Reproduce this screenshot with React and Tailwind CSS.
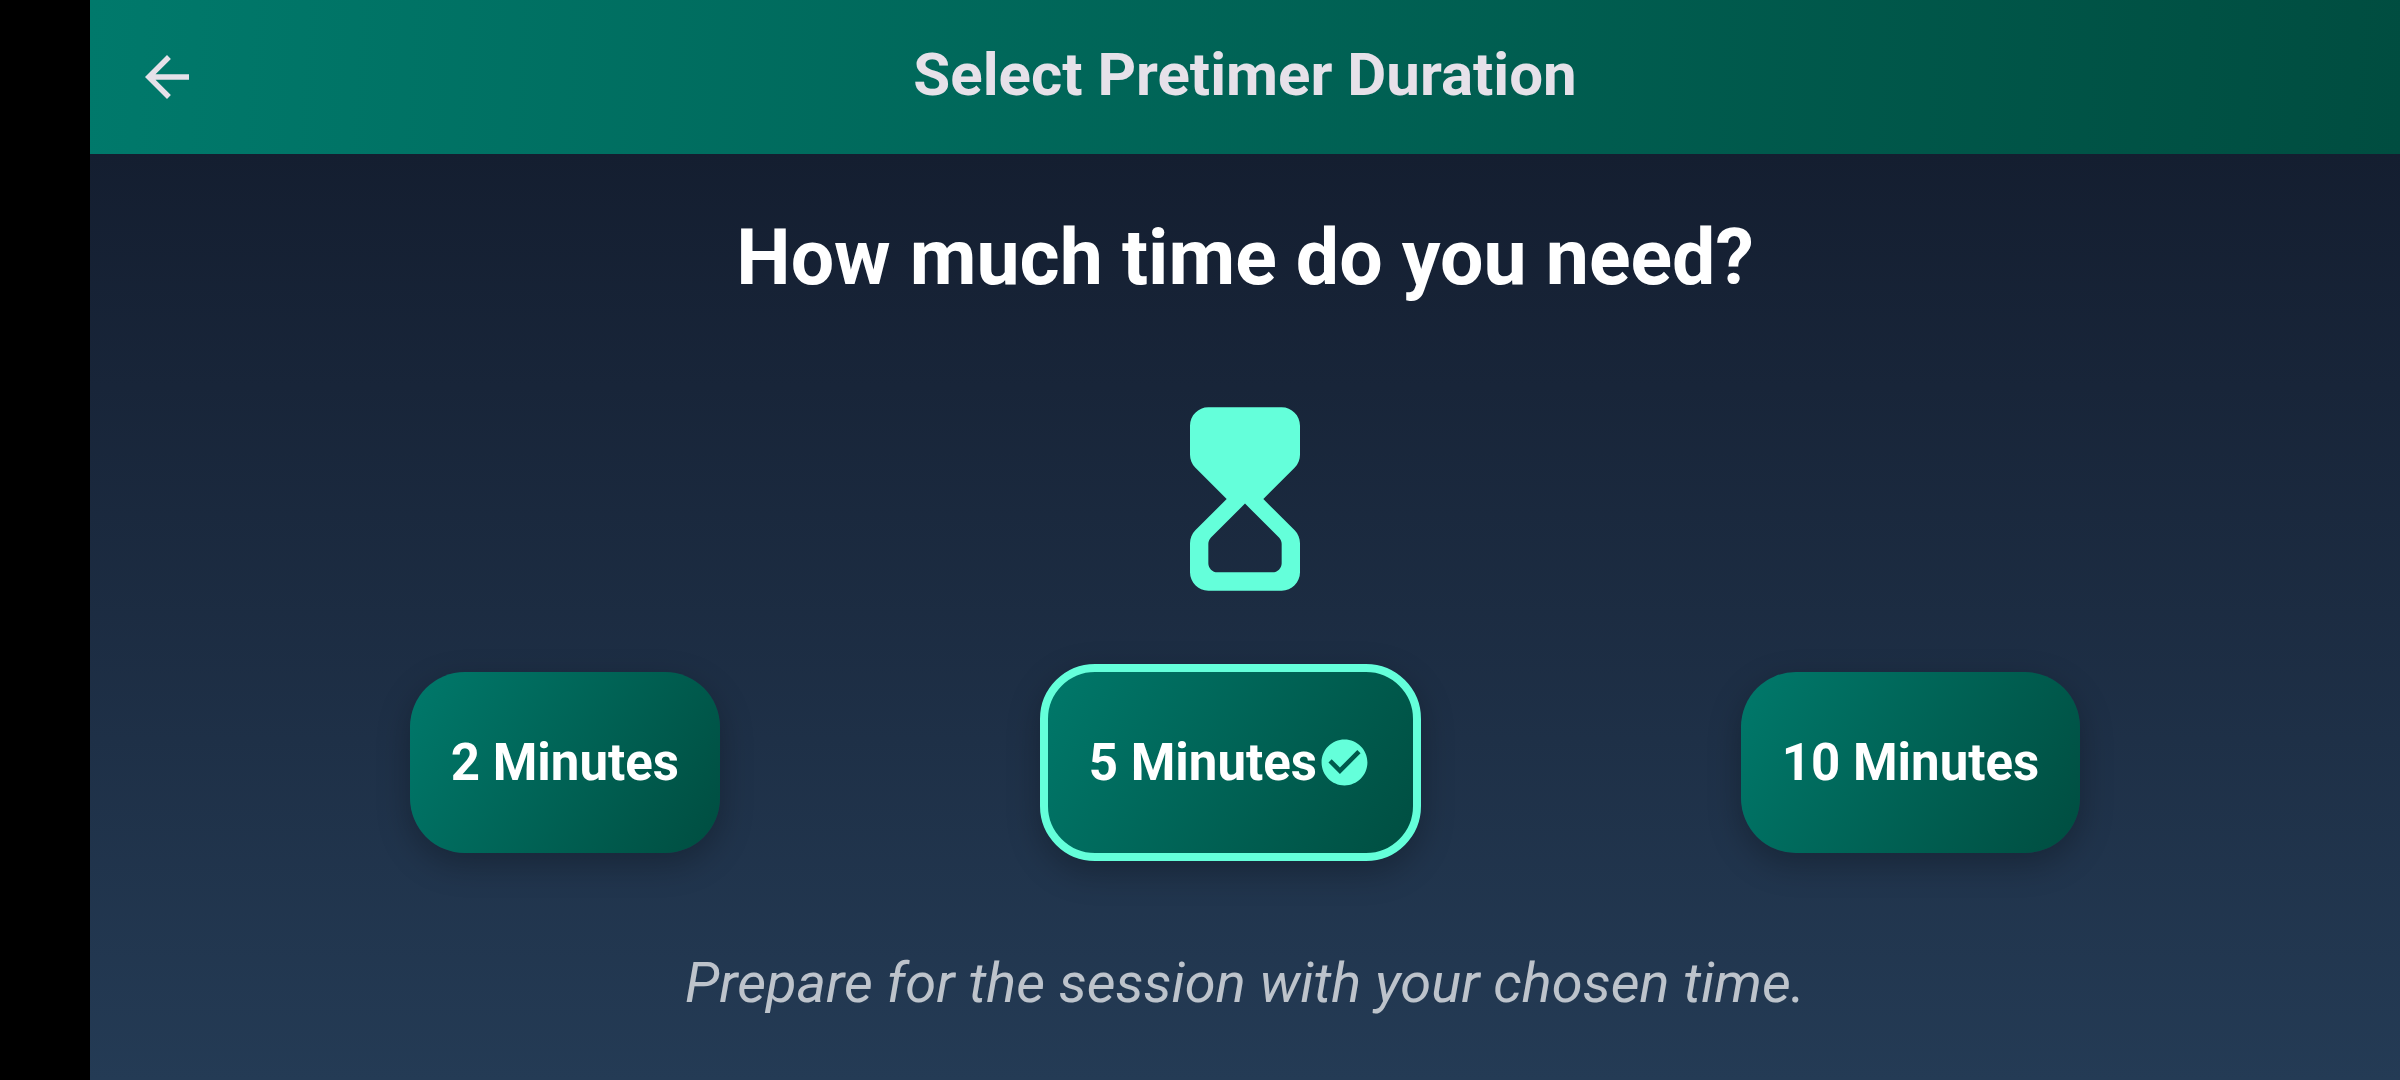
import { useState } from "react";
import { MdArrowBack, MdCheckCircle } from "react-icons/md";

const OPTIONS = [2, 5, 10];

function Hourglass() {
  return (
    <svg viewBox="0 0 24 24" className="size-[220px] text-[#64ffda]" fill="currentColor" aria-hidden="true">
      <path
        fillRule="evenodd"
        d="M8 2c-1.1 0-2 .9-2 2v3.17c0 .53.21 1.04.59 1.42L10 12l-3.42 3.42c-.37.38-.58.89-.58 1.42V20c0 1.1.9 2 2 2h8c1.1 0 2-.9 2-2v-3.16c0-.53-.21-1.04-.58-1.42L14 12l3.41-3.41c.38-.38.59-.89.59-1.42V4c0-1.1-.9-2-2-2H8zm8 14.91V19c0 .55-.45 1-1 1H9c-.55 0-1-.45-1-1v-2.09c0-.27.11-.52.29-.71L12 12.5l3.71 3.7c.18.19.29.44.29.71z"
      />
    </svg>
  );
}

function DurationButton({ minutes, selected, onSelect }) {
  return (
    <button
      type="button"
      aria-pressed={selected}
      onClick={onSelect}
      className={`flex items-center rounded-[55px] bg-[linear-gradient(120deg,#00796b,#004d40)] bg-origin-border px-[41px] py-[61px] text-[51px] leading-[59px] font-bold text-white shadow-[0_11px_33px_rgba(0,0,0,0.26)] ${
        selected ? "border-8 border-[#64ffda]" : ""
      }`}
    >
      <span>{minutes} Minutes</span>
      {selected && <MdCheckCircle className="size-[55px] text-[#64ffda]" aria-hidden="true" />}
    </button>
  );
}

export default function App() {
  const [selected, setSelected] = useState(5);

  return (
    <div className="flex min-h-screen bg-black pl-[90px] font-[Roboto,sans-serif]">
      <div className="flex flex-1 flex-col">
        <header className="grid grid-cols-[154px_1fr_154px] items-center bg-[linear-gradient(94deg,#00796b,#004d40)] py-[11px] text-[#e6e1e9]">
          <button type="button" aria-label="Back" className="flex size-[132px] items-center justify-center justify-self-center">
            <MdArrowBack className="size-[66px]" aria-hidden="true" />
          </button>
          <h1 className="pb-1 text-center text-[60px] leading-[72px] font-bold">Select Pretimer Duration</h1>
        </header>

        <main className="flex flex-1 flex-col items-center bg-linear-to-b from-[#141e30] to-[#243b55] pt-[59px]">
          <h2 className="text-center text-[77px] leading-[90px] font-bold text-white">How much time do you need?</h2>
          <div className="mt-[86px]">
            <Hourglass />
          </div>
          <div className="mt-[55px] flex w-full items-center justify-evenly">
            {OPTIONS.map((minutes) => (
              <DurationButton
                key={minutes}
                minutes={minutes}
                selected={selected === minutes}
                onSelect={() => setSelected(minutes)}
              />
            ))}
          </div>
          <p className="mt-[90px] text-center text-[56px] leading-[64px] text-white/70 italic">
            Prepare for the session with your chosen time.
          </p>
        </main>
      </div>
    </div>
  );
}
